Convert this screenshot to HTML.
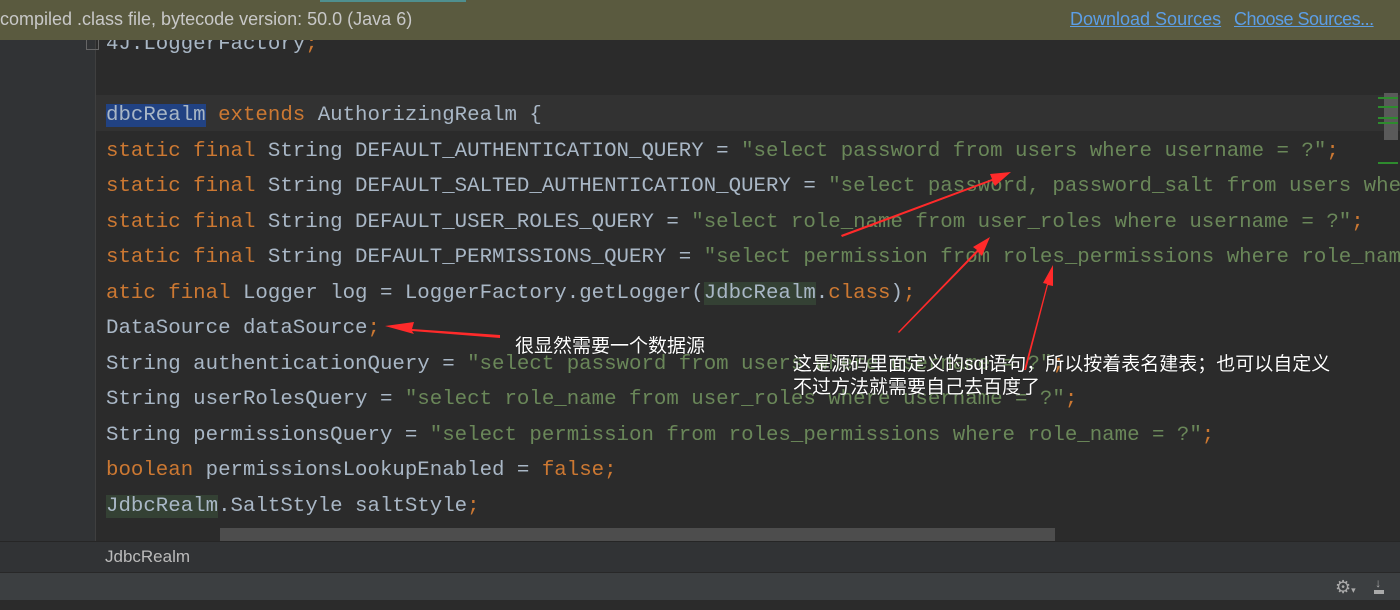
<!DOCTYPE html>
<html><head><meta charset="utf-8"><style>
body{margin:0;width:1400px;height:610px;overflow:hidden;background:#2b2b2b;position:relative;font-family:"Liberation Mono",monospace}
.ab{position:absolute}
#clip{position:absolute;left:0;top:0;width:1400px;height:541px;overflow:hidden}
.ln{position:absolute;left:106px;height:35.45px;line-height:35.45px;font-size:20.75px;color:#a9b7c6;white-space:pre;letter-spacing:0}
.k{color:#cc7832}.s{color:#6a8759}
.sel{background:#214283}.hl{background:#344134}
.cn{position:absolute;font-family:"Liberation Sans","Noto Sans CJK SC",sans-serif;color:#fff;font-size:19px;white-space:nowrap;text-shadow:0 0 1px #000}
</style></head><body>
<div id="clip">
<div class="ab" style="left:0;top:40px;width:95px;height:502px;background:#313335"></div>
<div class="ab" style="left:95px;top:40px;width:1px;height:502px;background:#3f3f3f"></div>
<div class="ab" style="left:96px;top:95px;width:1304px;height:36px;background:#323232"></div>
<div class="ab" style="left:86px;top:37px;width:13px;height:13px;border:1px solid #666;box-sizing:border-box"></div>

<div class="ln" style="top:27px">4J.LoggerFactory<span class="k">;</span></div>
<div class="ln" style="top:98px"><span class="sel">dbcRealm</span> <span class="k">extends</span> AuthorizingRealm {</div>
<div class="ln" style="top:134px"><span class="k">static final</span> String DEFAULT_AUTHENTICATION_QUERY = <span class="s">"select password from users where username = ?"</span><span class="k">;</span></div>
<div class="ln" style="top:169px"><span class="k">static final</span> String DEFAULT_SALTED_AUTHENTICATION_QUERY = <span class="s">"select password, password_salt from users where username = ?"</span></div>
<div class="ln" style="top:205px"><span class="k">static final</span> String DEFAULT_USER_ROLES_QUERY = <span class="s">"select role_name from user_roles where username = ?"</span><span class="k">;</span></div>
<div class="ln" style="top:240px"><span class="k">static final</span> String DEFAULT_PERMISSIONS_QUERY = <span class="s">"select permission from roles_permissions where role_name = ?"</span></div>
<div class="ln" style="top:276px"><span class="k">atic final</span> Logger log = LoggerFactory.getLogger(<span class="hl">JdbcRealm</span>.<span class="k">class</span>)<span class="k">;</span></div>
<div class="ln" style="top:311px">DataSource dataSource<span class="k">;</span></div>
<div class="ln" style="top:347px">String authenticationQuery = <span class="s">"select password from users where username = ?"</span><span class="k">;</span></div>
<div class="ln" style="top:382px">String userRolesQuery = <span class="s">"select role_name from user_roles where username = ?"</span><span class="k">;</span></div>
<div class="ln" style="top:418px">String permissionsQuery = <span class="s">"select permission from roles_permissions where role_name = ?"</span><span class="k">;</span></div>
<div class="ln" style="top:453px"><span class="k">boolean</span> permissionsLookupEnabled = <span class="k">false;</span></div>
<div class="ln" style="top:489px"><span class="hl">JdbcRealm</span>.SaltStyle saltStyle<span class="k">;</span></div>
</div>

<!-- top banner -->
<div class="ab" style="left:0;top:0;width:1400px;height:40px;background:#5a5a3f"></div>
<div class="ab" style="left:320px;top:0;width:146px;height:2px;background:#4f8f8f"></div>
<div class="ab" style="left:0;top:9px;font-family:'Liberation Sans',sans-serif;font-size:18px;color:#c8c8c8">compiled .class file, bytecode version: 50.0 (Java 6)</div>
<div class="ab" style="left:1070px;top:9px;font-family:'Liberation Sans',sans-serif;font-size:18px;color:#5c9ee6;text-decoration:underline">Download Sources</div>
<div class="ab" style="left:1234px;top:9px;font-family:'Liberation Sans',sans-serif;font-size:18px;letter-spacing:-0.5px;color:#5c9ee6;text-decoration:underline">Choose Sources...</div>

<!-- right scroll/markers -->
<div class="ab" style="left:1384px;top:93px;width:14px;height:47px;background:#5a5a5a"></div>
<div class="ab" style="left:1378px;top:97px;width:20px;height:2px;background:#2e8b2e"></div>
<div class="ab" style="left:1378px;top:106px;width:20px;height:2px;background:#2e8b2e"></div>
<div class="ab" style="left:1378px;top:117px;width:20px;height:2px;background:#2e8b2e"></div>
<div class="ab" style="left:1378px;top:122px;width:20px;height:2px;background:#2e8b2e"></div>
<div class="ab" style="left:1378px;top:162px;width:20px;height:2px;background:#2e8b2e"></div>

<!-- h scrollbar -->
<div class="ab" style="left:220px;top:528px;width:835px;height:13px;background:#4d4d4d"></div>
<div class="ab" style="left:0;top:541px;width:1400px;height:1px;background:#262626"></div>
<div class="ab" style="left:0;top:542px;width:1400px;height:30px;background:#313335"></div>
<div class="ab" style="left:105px;top:547px;font-family:'Liberation Sans',sans-serif;font-size:17px;color:#bbb">JdbcRealm</div>
<div class="ab" style="left:0;top:572px;width:1400px;height:1px;background:#282828"></div>
<div class="ab" style="left:0;top:573px;width:1400px;height:27px;background:#3c3f41"></div>
<div class="ab" style="left:1335px;top:577px;font-size:18px;color:#aaa;font-family:'DejaVu Sans',sans-serif">⚙<span style="font-size:9px">▾</span></div>
<div class="ab" style="left:1373px;top:579px;width:10px;height:15px;font-size:12px;color:#aaa;line-height:10px;text-align:center">↓</div>
<div class="ab" style="left:1374px;top:590px;width:10px;height:4px;background:#aaa"></div>

<!-- annotations -->
<svg class="ab" style="left:0;top:0" width="1400" height="610">
<g fill="#ff2a2a">
<polygon points="500,335 412,329 414,322 385,326 414,334 412,331 500,338"/>
<polygon points="842,237 992,181 995,186 1011,172 990,174 992,179 841,235"/>
<polygon points="899,333 978,252 982,256 990,237 973,247 977,250 898,332"/>
<polygon points="1026,370 1048,285 1053,286 1053,265 1043,283 1047,284 1024,370"/>
</g>
</svg>
<div class="cn" style="left:515px;top:331px">很显然需要一个数据源</div>
<div class="cn" style="left:793px;top:349px">这是源码里面定义的sql语句，所以按着表名建表；也可以自定义</div>
<div class="cn" style="left:793px;top:372px">不过方法就需要自己去百度了</div>
</body></html>
